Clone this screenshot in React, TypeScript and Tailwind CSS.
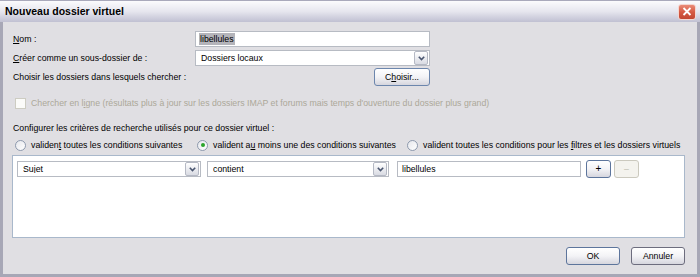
import React from 'react'

const btn =
  'flex items-center justify-center rounded-[3px] border bg-gradient-to-b from-[#ffffff] via-[#f3f3f6] to-[#d6d6de] text-black'

function ComboArrow() {
  return (
    <div className="flex h-[14px] w-[14px] items-center justify-center rounded-[2px] border border-[#b5b9c4] bg-gradient-to-b from-[#ffffff] to-[#d9dbe3]">
      <svg width="7" height="5" viewBox="0 0 7 5">
        <path d="M0.8 0.8 L3.5 3.6 L6.2 0.8" fill="none" stroke="#4a5670" strokeWidth="1.6" />
      </svg>
    </div>
  )
}

function Combo({ value, w }: { value: string; w: string }) {
  return (
    <div className={`flex h-[16px] items-center border border-[#b7bbc3] bg-white pl-[5px] pr-px ${w}`}>
      <span className="flex-1 truncate">{value}</span>
      <ComboArrow />
    </div>
  )
}

function Radio({ checked }: { checked?: boolean }) {
  return (
    <span className="flex h-[11px] w-[11px] shrink-0 items-center justify-center rounded-full border border-[#8e9aae] bg-gradient-to-br from-[#e6e7ec] to-[#ffffff]">
      {checked && <span className="h-[4px] w-[4px] rounded-full bg-[#2ca52c]" />}
    </span>
  )
}

export default function App() {
  return (
    <div className="flex h-[277px] w-[700px] flex-col bg-[#e0dfe3] font-['Liberation_Sans',Arial,sans-serif] text-[8.75px] leading-none text-black">
      {/* title bar */}
      <div className="flex h-[22px] shrink-0 items-center justify-between border-t border-[#a9a9bb] bg-gradient-to-b from-[#fbfbfd] via-[#e6e6ee] to-[#c0c0d2] pl-[5px] pr-[4px]">
        <span className="text-[10.5px] font-bold text-black">Nouveau dossier virtuel</span>
        <div className="flex h-[16px] w-[18px] items-center justify-center rounded-[3px] border border-[#f4d6d0] bg-gradient-to-b from-[#e98b78] via-[#d65a43] to-[#c24631]">
          <svg width="10" height="9" viewBox="0 0 10 9">
            <path d="M1.5 1 L8.5 8 M8.5 1 L1.5 8" stroke="#fff" strokeWidth="1.8" />
          </svg>
        </div>
      </div>

      {/* body */}
      <div className="flex flex-1 flex-col border-x-[3px] border-b-[3px] border-[#a7a7b6] pl-[10px] pr-[12px]">
        <div className="mt-[9px] flex h-[16px] items-center">
          <span className="w-[182px]">
            <span className="underline">N</span>om :
          </span>
          <div className="flex h-[16px] w-[235px] items-center border border-[#b7bbc3] bg-white pl-[3px]">
            <span className="bg-[#b4b4ba] px-px py-[2px]">libellules</span>
          </div>
        </div>

        <div className="mt-[3px] flex h-[16px] items-center">
          <span className="w-[182px]">
            <span className="underline">C</span>réer comme un sous-dossier de :
          </span>
          <Combo value="Dossiers locaux" w="w-[235px]" />
        </div>

        <div className="mt-[2px] flex h-[18px] items-center">
          <span className="w-[182px]">Choisir les dossiers dans lesquels chercher :</span>
          <div className="flex w-[235px] justify-end">
            <div className={`${btn} h-[18px] w-[56px] border-[#6c86ad]`}>
              C<span className="underline">h</span>oisir...
            </div>
          </div>
        </div>

        <div className="ml-[2px] mt-[11px] flex h-[12px] items-center gap-[5px] text-[#aca899]">
          <span className="h-[11px] w-[11px] border border-[#cdccc2] bg-[#fbfbf9]" />
          <span>
            Chercher en l<span className="underline">i</span>gne (résultats plus à jour sur les dossiers IMAP et forums mais temps d'ouverture du dossier plus grand)
          </span>
        </div>

        <div className="mt-[13px] flex h-[12px] items-center">
          Configurer les critères de recherche utilisés pour ce dossier virtuel :
        </div>

        <div className="ml-[2px] mt-[5px] flex h-[12px] items-center">
          <label className="flex w-[182px] items-center gap-[5px]">
            <Radio />
            <span>
              validen<span className="underline">t</span> toutes les conditions suivantes
            </span>
          </label>
          <label className="flex w-[210px] items-center gap-[5px]">
            <Radio checked />
            <span>
              valident a<span className="underline">u</span> moins une des conditions suivantes
            </span>
          </label>
          <label className="flex items-center gap-[5px]">
            <Radio />
            <span>
              valident toutes les conditions pour les <span className="underline">f</span>iltres et les dossiers virtuels
            </span>
          </label>
        </div>

        <div className="ml-[-1px] mt-[4px] h-[83px] w-[673px] border border-[#a9b8cb] bg-white pl-[4px] pt-[4px]">
          <div className="flex h-[18px] items-center">
            <Combo value="Sujet" w="w-[184px]" />
            <div className="w-[6px]" />
            <Combo value="contient" w="w-[182px]" />
            <div className="w-[8px]" />
            <div className="flex h-[16px] w-[184px] items-center border border-[#b7bbc3] bg-white pl-[4px]">
              libellules
            </div>
            <div className="w-[5px]" />
            <div className={`${btn} h-[18px] w-[25px] border-[#5d759c] text-[10px]`}>+</div>
            <div className="w-[3px]" />
            <div className="flex h-[18px] w-[25px] items-center justify-center rounded-[3px] border border-[#cbc9be] bg-[#f4f3ee] text-[#c0bdb0]">
              –
            </div>
          </div>
        </div>

        <div className="mt-[9px] flex justify-end gap-[11px]">
          <div className={`${btn} h-[18px] w-[54px] border-[#5d759c]`}>OK</div>
          <div className={`${btn} h-[18px] w-[54px] border-[#6d6d7e]`}>Annuler</div>
        </div>
      </div>
    </div>
  )
}
